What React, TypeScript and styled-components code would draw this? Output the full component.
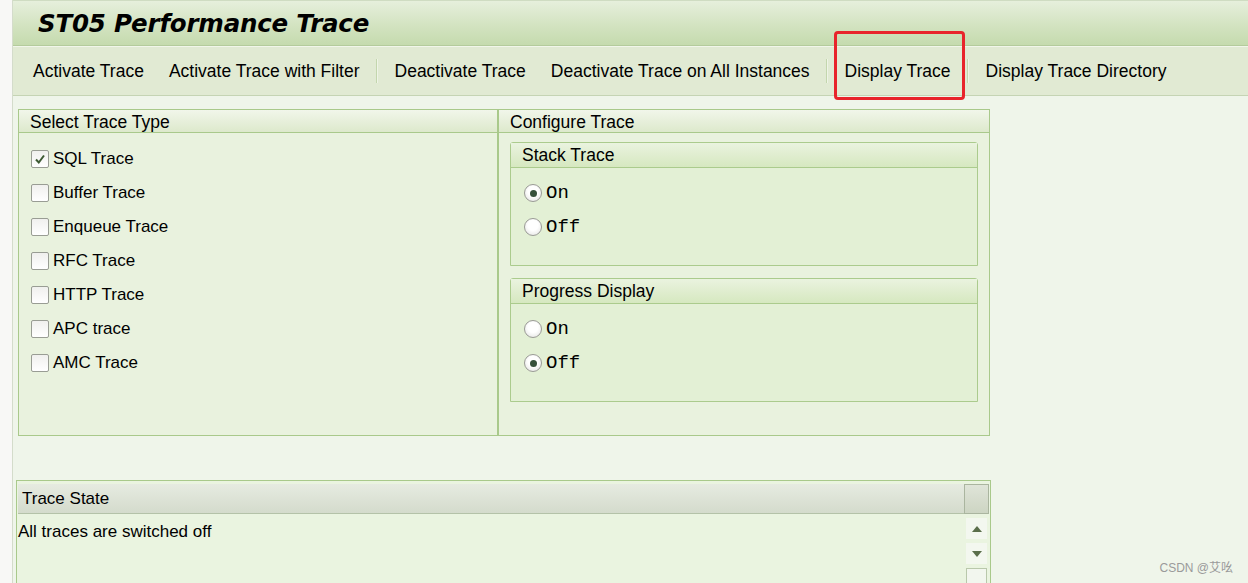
import React from 'react'
import styled, { createGlobalStyle, css } from 'styled-components'

const GlobalStyle = createGlobalStyle`
	html, body {
		margin: 0;
		padding: 0;
		background: #eff5ea;
	}
	body {
		font-family: 'Liberation Sans', Arial, sans-serif;
		color: #000;
	}
`

const Screen = styled.div`
	display: flex;
	height: 583px;
	overflow: hidden;
	position: relative;
`

const LeftStrip = styled.div`
	width: 12px;
	flex-shrink: 0;
	background: #f8f8f6;
	border-right: 1px solid #d4dccb;
`

const Main = styled.div`
	flex: 1;
	display: flex;
	flex-direction: column;
	min-width: 0;
`

const TitleBar = styled.div`
	height: 44px;
	flex-shrink: 0;
	display: flex;
	align-items: center;
	padding-left: 25px;
	border-top: 1px solid #cfdcc2;
	border-bottom: 1px solid #b4cb9c;
	background: linear-gradient(to bottom, #e6efdc 0%, #d3e3c1 55%, #c5dbae 100%);
`

const Title = styled.h1`
	margin: 0;
	font-family: 'DejaVu Sans', Verdana, sans-serif;
	font-size: 24.5px;
	font-weight: bold;
	font-style: italic;
	letter-spacing: -0.2px;
`

const Toolbar = styled.div`
	height: 48px;
	flex-shrink: 0;
	display: flex;
	align-items: center;
	padding-left: 7.5px;
	background: #e1ead3;
	border-top: 1px solid #f1f6ea;
	border-bottom: 1px solid #c5d4b4;
`

const ToolButton = styled.div`
	position: relative;
	padding: 0 12.5px;
	font-size: 17.5px;
	white-space: nowrap;
	line-height: 30px;
`

const Highlight = styled.div`
	position: absolute;
	top: -25px;
	bottom: -14px;
	left: 2px;
	right: -2px;
	border: 3px solid #e8242b;
	border-radius: 4px;
`

const Separator = styled.div`
	width: 1px;
	height: 24px;
	margin: 0 5px 0 4px;
	background: #c3d6ad;
	box-shadow: 1px 0 0 #eef4e6;
`

const Content = styled.div`
	flex-shrink: 0;
	padding: 13px 0 0 5px;
	display: flex;
	flex-direction: column;
`

const PanelRow = styled.div`
	display: flex;
	height: 327px;
`

const Panel = styled.div<{ $width: number }>`
	width: ${({ $width }) => $width}px;
	box-sizing: border-box;
	border: 1px solid #a9c98b;
	background: #e9f2de;
	display: flex;
	flex-direction: column;
`

const PanelHeader = styled.div<{ $gray?: boolean }>`
	height: 23px;
	flex-shrink: 0;
	display: flex;
	align-items: center;
	padding: 2px 0 0 11px;
	box-sizing: border-box;
	font-size: 17.5px;
	border-bottom: 1px solid #a9c98b;
	background: linear-gradient(to bottom, #f1f6ea 0%, #dde9cc 100%);
	${({ $gray }) =>
		$gray &&
		css`
			height: 30px;
			padding: 1px 0 0 4px;
			font-size: 17px;
			border-bottom: 1px solid #b4c2a8;
			background: linear-gradient(to bottom, #e6ebe1 0%, #d4dbcc 100%);
		`}
`

const OptionList = styled.div`
	padding: 9px 0 0 12px;
	display: flex;
	flex-direction: column;
`

const OptionRow = styled.label`
	height: 34px;
	display: flex;
	align-items: center;
	font-size: 17px;
`

const CheckBox = styled.span`
	width: 18px;
	height: 18px;
	margin-right: 4px;
	box-sizing: border-box;
	border: 1px solid #999d94;
	border-radius: 2px;
	background: linear-gradient(to bottom, #f0f0ee, #ffffff);
	display: flex;
	align-items: center;
	justify-content: center;
`

const SubPanels = styled.div`
	padding: 9px 11px 0 11px;
	display: flex;
	flex-direction: column;
	gap: 12px;
`

const SubPanel = styled.div`
	height: 124px;
	box-sizing: border-box;
	border: 1px solid #abcb8d;
	border-radius: 3px 3px 0 0;
	background: #e3f0d5;
	display: flex;
	flex-direction: column;
`

const SubHeader = styled.div`
	height: 25px;
	flex-shrink: 0;
	display: flex;
	align-items: center;
	padding: 1px 0 0 11px;
	box-sizing: border-box;
	font-size: 17.5px;
	border-bottom: 1px solid #abcb8d;
	background: linear-gradient(to bottom, #eaf3df 0%, #d6e8c0 100%);
`

const RadioList = styled.div`
	padding: 8px 0 0 13px;
	display: flex;
	flex-direction: column;
`

const RadioRow = styled.label`
	height: 34px;
	display: flex;
	align-items: center;
	font-family: 'Liberation Mono', 'Courier New', monospace;
	font-size: 19px;
`

const Radio = styled.span<{ $checked?: boolean }>`
	width: 18px;
	height: 18px;
	margin-right: 4px;
	box-sizing: border-box;
	border-radius: 50%;
	border: 1px solid #9a9a96;
	background: radial-gradient(circle at 50% 40%, #ffffff 40%, #e0e0de 100%);
	display: flex;
	align-items: center;
	justify-content: center;
	&::after {
		content: '';
		width: 7px;
		height: 7px;
		border-radius: 50%;
		background: ${({ $checked }) => ($checked ? '#36503a' : 'transparent')};
	}
`

const StatePanel = styled.div`
	margin-top: 44px;
	margin-left: -2px;
	width: 975px;
	height: 120px;
	box-sizing: border-box;
	border: 1px solid #a9c98b;
	background: #eaf4e0;
	display: flex;
	padding: 3px 1px 0 1px;
`

const StateBody = styled.div`
	flex: 1;
	display: flex;
	flex-direction: column;
`

const StateText = styled.div`
	padding-top: 8px;
	font-size: 17px;
`

const ScrollBar = styled.div`
	width: 25px;
	display: flex;
	flex-direction: column;
	align-items: center;
	gap: 4px;
`

const ScrollTop = styled.div`
	width: 25px;
	height: 30px;
	box-sizing: border-box;
	border: 1px solid #aab59f;
	background: linear-gradient(to bottom, #dfe4d8, #cdd5c3);
`

const ScrollArrow = styled.div`
	width: 21px;
	height: 21px;
	background: #f3f7ef;
	display: flex;
	align-items: center;
	justify-content: center;
`

const ScrollThumb = styled.div`
	width: 21px;
	height: 30px;
	box-sizing: border-box;
	border: 1px solid #b9c8ab;
	background: #f2f6ee;
`

const Watermark = styled.div`
	position: absolute;
	right: 15px;
	bottom: 8px;
	font-family: 'Liberation Sans', 'Noto Sans CJK SC', sans-serif;
	font-size: 12px;
	color: #9a9a9a;
`

const traceTypes = [
	{ label: 'SQL Trace', checked: true },
	{ label: 'Buffer Trace' },
	{ label: 'Enqueue Trace' },
	{ label: 'RFC Trace' },
	{ label: 'HTTP Trace' },
	{ label: 'APC trace' },
	{ label: 'AMC Trace' },
]

const OnOff = ({ on }: { on: boolean }) => (
	<RadioList>
		<RadioRow>
			<Radio $checked={on} />
			On
		</RadioRow>
		<RadioRow>
			<Radio $checked={!on} />
			Off
		</RadioRow>
	</RadioList>
)

export default function App() {
	return (
		<>
			<GlobalStyle />
			<Screen>
				<LeftStrip />
				<Main>
					<TitleBar>
						<Title>ST05 Performance Trace</Title>
					</TitleBar>
					<Toolbar>
						<ToolButton>Activate Trace</ToolButton>
						<ToolButton>Activate Trace with Filter</ToolButton>
						<Separator />
						<ToolButton>Deactivate Trace</ToolButton>
						<ToolButton>Deactivate Trace on All Instances</ToolButton>
						<Separator />
						<ToolButton>
							Display Trace
							<Highlight />
						</ToolButton>
						<Separator />
						<ToolButton>Display Trace Directory</ToolButton>
					</Toolbar>
					<Content>
						<PanelRow>
							<Panel $width={480}>
								<PanelHeader>Select Trace Type</PanelHeader>
								<OptionList>
									{traceTypes.map((t) => (
										<OptionRow key={t.label}>
											<CheckBox>
												{t.checked && (
													<svg width="12" height="12" viewBox="0 0 12 12">
														<path d="M2 6.5 L4.8 9.5 L10 2.5" fill="none" stroke="#3d5a33" strokeWidth="2" />
													</svg>
												)}
											</CheckBox>
											{t.label}
										</OptionRow>
									))}
								</OptionList>
							</Panel>
							<Panel $width={492}>
								<PanelHeader>Configure Trace</PanelHeader>
								<SubPanels>
									<SubPanel>
										<SubHeader>Stack Trace</SubHeader>
										<OnOff on />
									</SubPanel>
									<SubPanel>
										<SubHeader>Progress Display</SubHeader>
										<OnOff on={false} />
									</SubPanel>
								</SubPanels>
							</Panel>
						</PanelRow>
						<StatePanel>
							<StateBody>
								<PanelHeader $gray>Trace State</PanelHeader>
								<StateText>All traces are switched off</StateText>
							</StateBody>
							<ScrollBar>
								<ScrollTop />
								<ScrollArrow>
									<svg width="12" height="8" viewBox="0 0 12 8">
										<path d="M6 1 L11 7 L1 7 Z" fill="#5a6e4a" />
									</svg>
								</ScrollArrow>
								<ScrollArrow>
									<svg width="12" height="8" viewBox="0 0 12 8">
										<path d="M1 1 L11 1 L6 7 Z" fill="#5a6e4a" />
									</svg>
								</ScrollArrow>
								<ScrollThumb />
							</ScrollBar>
						</StatePanel>
					</Content>
				</Main>
				<Watermark>CSDN @艾吆</Watermark>
			</Screen>
		</>
	)
}
